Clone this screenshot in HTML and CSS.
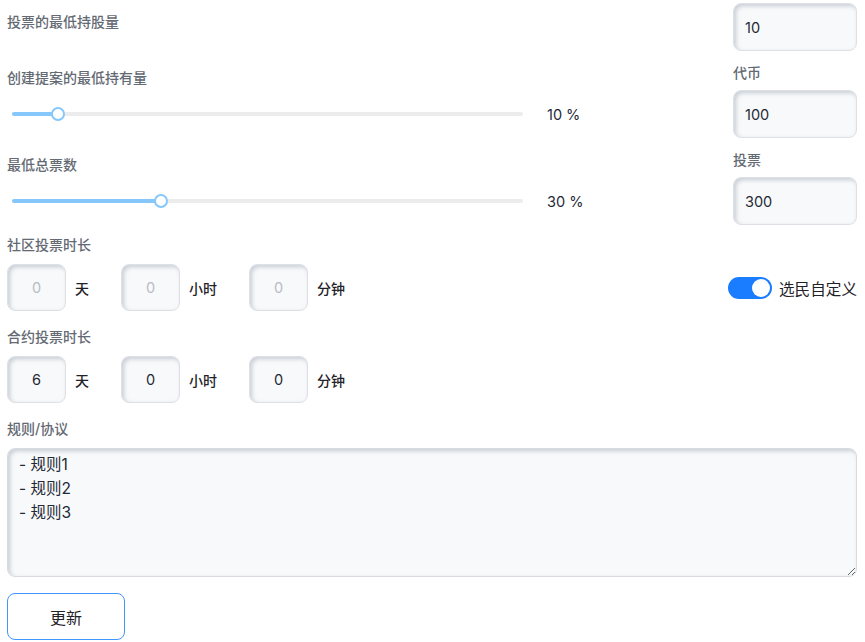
FILE: index.html
```html
<!DOCTYPE html>
<html lang="zh">
<head>
<meta charset="utf-8">
<link rel="stylesheet" href="styles.css">
</head>
<body>
<div class="page">
  <div class="top">
    <div class="left">
      <div class="label first">投票的最低持股量</div>
      <div class="label second">创建提案的最低持有量</div>
      <div class="slider-row">
        <div class="slider">
          <div class="rail"><div class="track" style="width: 46px"></div><div class="handle" style="left: 46px"></div></div>
        </div>
        <span class="pct">10 %</span>
      </div>
      <div class="label third">最低总票数</div>
      <div class="slider-row">
        <div class="slider">
          <div class="rail"><div class="track" style="width: 149px"></div><div class="handle" style="left: 149px"></div></div>
        </div>
        <span class="pct">30 %</span>
      </div>
    </div>
    <div class="right">
      <div class="field first-field"><span>10</span></div>
      <div class="rlabel">代币</div>
      <div class="field"><span>100</span></div>
      <div class="rlabel">投票</div>
      <div class="field"><span>300</span></div>
    </div>
  </div>

  <div class="label sect top-sect">社区投票时长</div>
  <div class="dur-row">
    <div class="group"><div class="box disabled">0</div><span class="unit">天</span></div>
    <div class="group"><div class="box disabled">0</div><span class="unit">小时</span></div>
    <div class="group"><div class="box disabled">0</div><span class="unit">分钟</span></div>
    <div class="toggle-wrap">
      <span class="toggle"><span class="knob"></span></span>
      <span class="toggle-text">选民自定义</span>
    </div>
  </div>

  <div class="label sect">合约投票时长</div>
  <div class="dur-row">
    <div class="group"><div class="box">6</div><span class="unit">天</span></div>
    <div class="group"><div class="box">0</div><span class="unit">小时</span></div>
    <div class="group"><div class="box">0</div><span class="unit">分钟</span></div>
  </div>

  <div class="label sect">规则/协议</div>
  <textarea class="rules">- 规则1
- 规则2
- 规则3</textarea>

  <button class="btn">更新</button>
</div>
</body>
</html>
```

FILE: styles.css
```css
* { box-sizing: border-box; }
html, body { margin: 0; padding: 0; background: #fff; }
body {
  font-family: Inter, "Noto Sans CJK SC", sans-serif;
  color: #1f2329;
}
.page {
  width: 850px;
  margin-left: 7px;
  display: flex;
  flex-direction: column;
}
.top {
  display: flex;
  justify-content: space-between;
}
.left {
  width: 600px;
  display: flex;
  flex-direction: column;
}
.label {
  font-size: 14px;
  line-height: 20px;
  height: 20px;
  color: #646a73;
  font-weight: 500;
}
.label.first { margin-top: 12px; }
.label.second { margin-top: 36px; }
.label.third { margin-top: 29px; }
.slider-row {
  display: flex;
  align-items: center;
  height: 24px;
  margin-top: 14px;
}
.slider {
  width: 526px;
  padding: 0 10px 0 5px;
}
.rail {
  position: relative;
  height: 4px;
  border-radius: 2px;
  background: #ececec;
}
.track {
  height: 4px;
  border-radius: 2px;
  background: #86c8fb;
}
.handle {
  position: absolute;
  top: 50%;
  width: 14px;
  height: 14px;
  margin: -7px 0 0 -7px;
  border-radius: 50%;
  background: #fff;
  border: 2px solid #86c8fb;
}
.pct {
  margin-left: 14px;
  font-size: 14.5px;
  color: #1f2937;
}
.right {
  width: 124px;
  display: flex;
  flex-direction: column;
}
.field {
  height: 48px;
  border: 1px solid #dde1e6;
  border-radius: 8px;
  background: #f8f9fa;
  box-shadow: inset 2px 2px 4px rgba(130, 145, 165, 0.42);
  display: flex;
  align-items: center;
  padding-left: 11px;
  font-size: 14.5px;
  color: #1f2937;
}
.first-field { margin-top: 3px; }
.rlabel {
  height: 39px;
  display: flex;
  align-items: center;
  font-size: 14px;
  color: #646a73;
  font-weight: 500;
  padding-top: 2px;
}
.label.sect { margin-top: 16px; }
.label.top-sect { margin-top: 10px; }
.dur-row {
  display: flex;
  align-items: center;
  gap: 32px;
  margin-top: 9px;
  height: 47px;
}
.group {
  display: flex;
  align-items: center;
  gap: 9px;
}
.box {
  width: 59px;
  height: 47px;
  border: 1px solid #dde1e6;
  border-radius: 8px;
  background: #f8f9fa;
  box-shadow: inset 2px 2px 4px rgba(130, 145, 165, 0.42);
  display: flex;
  align-items: center;
  justify-content: center;
  font-size: 14.5px;
  color: #1f2937;
}
.box.disabled { color: #b8bcc2; }
.unit {
  font-size: 14px;
  font-weight: 500;
  color: #1f2329;
}
.toggle-wrap {
  margin-left: auto;
  display: flex;
  align-items: center;
  gap: 7px;
}
.toggle {
  width: 44px;
  height: 22px;
  border-radius: 11px;
  background: #1a7cff;
  display: flex;
  align-items: center;
  justify-content: flex-end;
  padding: 2px;
}
.knob {
  width: 18px;
  height: 18px;
  border-radius: 50%;
  background: #fff;
}
.toggle-text {
  font-size: 15.6px;
  color: #1f2329;
}
.rules {
  margin-top: 9px;
  width: 850px;
  height: 129px;
  border: 1px solid #d8dce1;
  border-radius: 8px;
  background: #f8f9fa;
  box-shadow: inset 2px 2px 4px rgba(130, 145, 165, 0.42);
  padding: 4px 11px;
  font-family: Inter, "Noto Sans CJK SC", sans-serif;
  font-size: 15.5px;
  font-weight: 400;
  line-height: 24px;
  color: #1f2937;
  outline: none;
}
.btn {
  margin-top: 16px;
  width: 118px;
  height: 47px;
  border: 1px solid #4096ff;
  border-radius: 8px;
  background: #fff;
  font-family: Inter, "Noto Sans CJK SC", sans-serif;
  font-size: 16px;
  color: #1f2329;
  padding: 0;
}
```
